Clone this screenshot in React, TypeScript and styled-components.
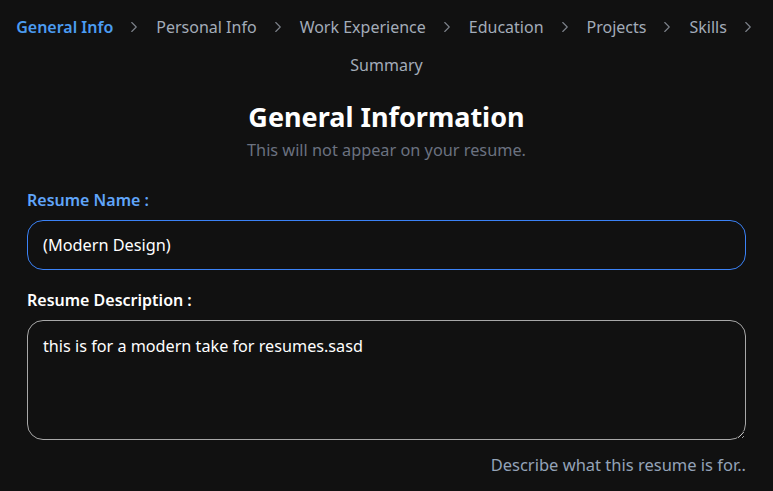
import React, { useEffect, useRef, useState } from "react";
import styled, { createGlobalStyle } from "styled-components";
import { ChevronRight } from "lucide-react";

const GlobalStyle = createGlobalStyle`
  html, body {
    margin: 0;
    padding: 0;
    background: #111111;
  }
  body {
    font-family: "Noto Sans", "Open Sans", sans-serif;
    color: #ffffff;
  }
  * {
    box-sizing: border-box;
  }
`;

const Page = styled.div`
  width: 773px;
  min-height: 491px;
  background: #111111;
  padding: 0 27px 20px;
`;

const StepNav = styled.nav`
  display: flex;
  flex-wrap: wrap;
  justify-content: center;
  column-gap: 13px;
  row-gap: 14px;
  padding-top: 15px;
  margin: 0 -27px;
`;

const Step = styled.div<{ $active?: boolean }>`
  display: flex;
  align-items: center;
  gap: 12px;
  height: 24px;
  font-size: 16px;
  line-height: 24px;
  font-weight: ${(p) => (p.$active ? 600 : 400)};
  color: ${(p) => (p.$active ? "#4b9cf2" : "#a3acb9")};
  cursor: pointer;

  svg {
    color: #7d828a;
  }
`;

const Header = styled.header`
  display: flex;
  flex-direction: column;
  align-items: center;
  margin-top: 22px;
`;

const Title = styled.h1`
  margin: 0;
  font-size: 27px;
  line-height: 36px;
  font-weight: 700;
  color: #ffffff;
`;

const Subtitle = styled.p`
  margin: 5px 0 0;
  font-size: 16.3px;
  line-height: 20px;
  color: #6b7280;
`;

const Form = styled.form`
  display: flex;
  flex-direction: column;
  margin-top: 29px;
`;

const Field = styled.div<{ $last?: boolean }>`
  display: flex;
  flex-direction: column;
  gap: 9px;
  margin-bottom: ${(p) => (p.$last ? 0 : 19)}px;
`;

const Label = styled.label<{ $focused?: boolean }>`
  font-size: 16px;
  line-height: 22px;
  font-weight: 600;
  color: ${(p) => (p.$focused ? "#60a5fa" : "#ffffff")};
`;

const TextInput = styled.input`
  width: 100%;
  height: 50px;
  padding: 0 15px;
  border-radius: 16px;
  border: 1px solid #3b82f6;
  background: #111111;
  color: #ffffff;
  font-family: inherit;
  font-size: 16.3px;
  outline: none;
  caret-color: #ffffff;
`;

const TextArea = styled.textarea`
  width: 100%;
  height: 120px;
  padding: 13px 15px 12px;
  border-radius: 16px;
  border: 1px solid #a8a8a8;
  background: #111111;
  color: #ffffff;
  font-family: inherit;
  font-size: 16.2px;
  line-height: 24px;
  outline: none;
  resize: vertical;
`;

const Hint = styled.p`
  margin: 14px 0 0;
  text-align: right;
  font-size: 16.5px;
  line-height: 22px;
  color: #94a3b8;
`;

const steps = [
  "General Info",
  "Personal Info",
  "Work Experience",
  "Education",
  "Projects",
  "Skills",
  "Summary",
];

const App: React.FC = () => {
  const [name, setName] = useState("(Modern Design)");
  const [description, setDescription] = useState(
    "this is for a modern take for resumes.sasd"
  );
  const nameRef = useRef<HTMLInputElement>(null);

  useEffect(() => {
    const el = nameRef.current;
    if (el) {
      el.focus();
      el.setSelectionRange(el.value.length, el.value.length);
    }
  }, []);

  return (
    <>
      <GlobalStyle />
      <Page>
        <StepNav>
          {steps.map((step, i) => (
            <Step key={step} $active={i === 0}>
              {step}
              {i < steps.length - 1 && <ChevronRight size={18} strokeWidth={1.5} />}
            </Step>
          ))}
        </StepNav>

        <Header>
          <Title>General Information</Title>
          <Subtitle>This will not appear on your resume.</Subtitle>
        </Header>

        <Form onSubmit={(e) => e.preventDefault()}>
          <Field>
            <Label htmlFor="resume-name" $focused>
              Resume Name :
            </Label>
            <TextInput
              id="resume-name"
              ref={nameRef}
              value={name}
              onChange={(e) => setName(e.target.value)}
            />
          </Field>
          <Field $last>
            <Label htmlFor="resume-description">Resume Description :</Label>
            <TextArea
              id="resume-description"
              value={description}
              onChange={(e) => setDescription(e.target.value)}
            />
          </Field>
          <Hint>Describe what this resume is for..</Hint>
        </Form>
      </Page>
    </>
  );
};

export default App;
